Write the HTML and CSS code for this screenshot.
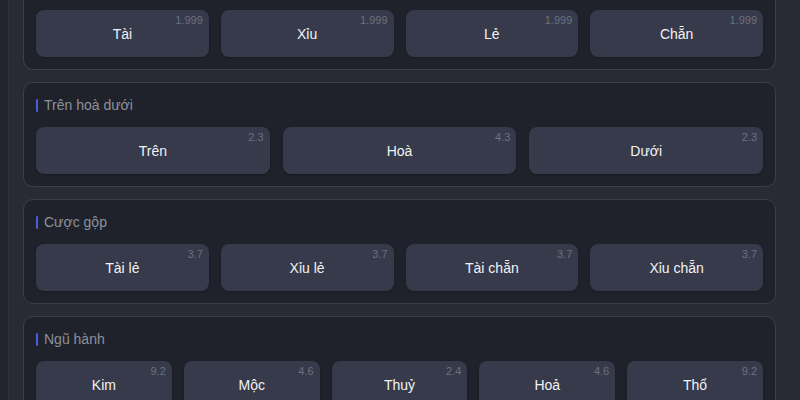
FILE: index.html
```html
<!DOCTYPE html>
<html lang="vi">
<head>
  <meta charset="UTF-8">
  <title>Cược</title>
  <link rel="stylesheet" href="styles.css">
</head>
<body>

<div class="khung">

  <!-- Tài xỉu chẵn lẻ (phần tiêu đề đã cuộn khỏi màn hình) -->
  <div class="nhom dau">
    <div class="luoi bon">
      <div class="nut">Tài<span class="ty-le">1.999</span></div>
      <div class="nut">Xỉu<span class="ty-le">1.999</span></div>
      <div class="nut">Lẻ<span class="ty-le">1.999</span></div>
      <div class="nut">Chẵn<span class="ty-le">1.999</span></div>
    </div>
  </div>

  <div class="nhom">
    <div class="tieu-de">Trên hoà dưới</div>
    <div class="luoi ba">
      <div class="nut">Trên<span class="ty-le">2.3</span></div>
      <div class="nut">Hoà<span class="ty-le">4.3</span></div>
      <div class="nut">Dưới<span class="ty-le">2.3</span></div>
    </div>
  </div>

  <div class="nhom">
    <div class="tieu-de">Cược gộp</div>
    <div class="luoi bon">
      <div class="nut">Tài lẻ<span class="ty-le">3.7</span></div>
      <div class="nut">Xỉu lẻ<span class="ty-le">3.7</span></div>
      <div class="nut">Tài chẵn<span class="ty-le">3.7</span></div>
      <div class="nut">Xỉu chẵn<span class="ty-le">3.7</span></div>
    </div>
  </div>

  <div class="nhom">
    <div class="tieu-de">Ngũ hành</div>
    <div class="luoi nam">
      <div class="nut">Kim<span class="ty-le">9.2</span></div>
      <div class="nut">Mộc<span class="ty-le">4.6</span></div>
      <div class="nut">Thuỷ<span class="ty-le">2.4</span></div>
      <div class="nut">Hoả<span class="ty-le">4.6</span></div>
      <div class="nut">Thổ<span class="ty-le">9.2</span></div>
    </div>
  </div>

</div>

</body>
</html>
```

FILE: styles.css
```css
body {
  margin: 0;
  background-color: #21242c;
  font-family: 'Liberation Sans', Arial, sans-serif;
  height: 400px;
  overflow: hidden;
}

.khung {
  margin-left: 8px;
  border-left: 1px solid #30333c;
  background-color: #282b34;
  padding: 0 24px 0 14px;
  min-height: 400px;
}

.nhom {
  background-color: #1f222a;
  border: 1px solid #3c3f48;
  border-radius: 10px;
  padding: 12px;
  margin-bottom: 12px;
}

/* cuộn lên một chút như ảnh */
.nhom.dau {
  margin-top: -3px;
  border-top: none;
  border-top-left-radius: 0;
  border-top-right-radius: 0;
  padding-top: 13px;
}

.tieu-de {
  height: 20px;
  line-height: 20px;
  font-size: 14px;
  color: #8d919c;
  margin-bottom: 12px;
  display: flex;
  align-items: center;
}

.tieu-de::before {
  content: "";
  width: 2px;
  height: 13px;
  background-color: #4c5ee0;
  margin-right: 6px;
  border-radius: 1px;
}

.luoi {
  display: grid;
  gap: 12px;
}

.luoi.ba { grid-template-columns: repeat(3, 1fr); gap: 13px; }
.luoi.bon { grid-template-columns: repeat(4, 1fr); }
.luoi.nam { grid-template-columns: repeat(5, 1fr); }

.nut {
  position: relative;
  height: 47px;
  background-color: #363a4a;
  border-radius: 8px;
  color: #f2f2f4;
  font-size: 14px;
  display: flex;
  align-items: center;
  justify-content: center;
  box-shadow: 0 1px 2px rgba(0, 0, 0, 0.25);
}

.ty-le {
  position: absolute;
  top: 4px;
  right: 6px;
  font-size: 11px;
  color: #6d7181;
}
```
